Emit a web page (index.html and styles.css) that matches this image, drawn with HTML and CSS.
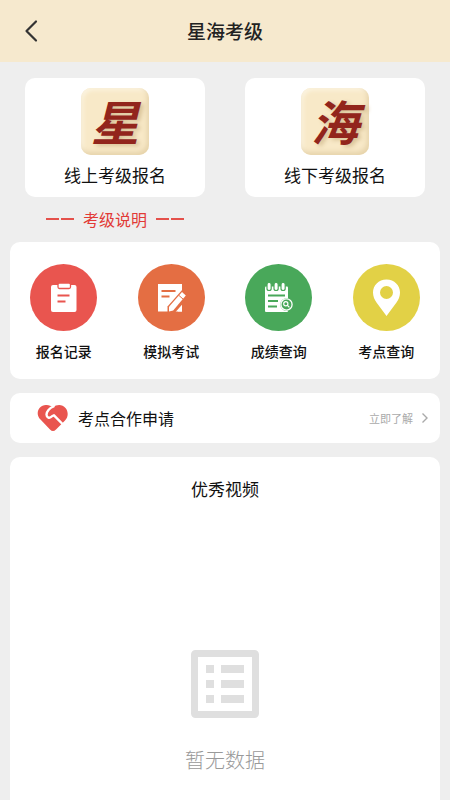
FILE: index.html
```html
<!DOCTYPE html>
<html lang="zh-CN">
<head>
<meta charset="utf-8">
<meta name="viewport" content="width=device-width, initial-scale=1">
<title>星海考级</title>
<link rel="stylesheet" href="styles.css">
</head>
<body>
<header class="topbar">
  <button class="back" type="button" aria-label="返回">
    <svg width="14" height="24" viewBox="0 0 14 24"><path d="M12 2.500L2.500 12L12 21.500" fill="none" stroke="#333" stroke-width="2.200" stroke-linecap="round" stroke-linejoin="round"/></svg>
  </button>
  <h1 class="title">星海考级</h1>
</header>
<main class="page">
  <nav class="entries">
    <a class="entry" href="#online"><span class="seal" aria-hidden="true">星</span><span>线上考级报名</span></a>
    <a class="entry" href="#offline"><span class="seal" aria-hidden="true">海</span><span>线下考级报名</span></a>
  </nav>
  <a class="notice" href="#notice"><span class="dashes"></span><span>考级说明</span><span class="dashes"></span></a>
  <nav class="panel menu">
    <a class="item" href="#records">
      <svg class="disc" viewBox="0 0 67 67"><circle cx="33.500" cy="33.500" r="33.500" fill="#e9554f"/><rect x="21" y="21" width="25.500" height="27" rx="2" fill="#fff"/><rect x="28" y="19" width="12.500" height="5.500" rx="1.500" fill="#fff" stroke="#e9554f" stroke-width="1.300"/><path d="M27.500 31.500h12M27.500 37.500h8" stroke="#e9554f" stroke-width="2.200"/></svg>
      <span>报名记录</span>
    </a>
    <a class="item" href="#mock">
      <svg class="disc" viewBox="0 0 67 67"><circle cx="33.500" cy="33.500" r="33.500" fill="#e46e43"/><path d="M20 20H44V47.500H20z" fill="#fff"/><path d="M23.500 27h14M23.500 32.500h8" stroke="#e46e43" stroke-width="2"/><path d="M44.500 25.500L29.500 42.500V48H37.500L50 34z" fill="#e46e43"/><path d="M44 28l3.800 3.400-12.600 15.100-4.200 1v-4.800z" fill="#fff"/><path d="M41 31.500l4.200 3.700" stroke="#e46e43" stroke-width="1"/><path d="M39.500 47.500L44 42.500v5z" fill="#fff"/></svg>
      <span>模拟考试</span>
    </a>
    <a class="item" href="#scores">
      <svg class="disc" viewBox="0 0 67 67"><circle cx="33.500" cy="33.500" r="33.500" fill="#49a85a"/><rect x="20" y="22.500" width="23" height="25.500" rx="1" fill="#fff"/><g fill="#fff" stroke="#49a85a" stroke-width="1.200"><rect x="22" y="18.500" width="4.200" height="8" rx="2"/><rect x="29" y="18.500" width="4.200" height="8" rx="2"/><rect x="36" y="18.500" width="4.200" height="8" rx="2"/></g><path d="M23 31.500h17M23 37h10M23 42.500h9" stroke="#49a85a" stroke-width="2"/><circle cx="41.500" cy="40.500" r="6.300" fill="#49a85a"/><circle cx="41.500" cy="40.500" r="5.600" fill="#49a85a" stroke="#fff" stroke-width="1.300"/><circle cx="40.800" cy="39.800" r="2.100" fill="none" stroke="#fff" stroke-width="1.200"/><path d="M42.400 41.400l2 2" stroke="#fff" stroke-width="1.300"/></svg>
      <span>成绩查询</span>
    </a>
    <a class="item" href="#sites">
      <svg class="disc" viewBox="0 0 67 67"><circle cx="33.500" cy="33.500" r="33.500" fill="#e2d146"/><path fill="#fff" fill-rule="evenodd" d="M33.500 15.500c-8 0-13.500 6-13.500 13 0 4 1.500 7 3.500 10L33.500 52l10-13.500c2-3 3.500-6 3.500-10 0-7-5.500-13-13.500-13zm0 6.500a6.500 6.500 0 1 1 0 13 6.500 6.500 0 0 1 0-13z"/></svg>
      <span>考点查询</span>
    </a>
  </nav>
  <a class="panel apply" href="#apply">
    <svg width="32" height="27" viewBox="0 0 32 27"><path fill="#e9554f" d="M16 2.500C12-1 6-.7 3 2.500-.3 6 0 11 3.500 14.500L13 24.500c2 2 4 2 6 0L28 15.500C31.500 12 31.500 6.500 28.500 3 25.500-.5 20-1 16 2.500z"/><path d="M16.500 1.500C12.500 3 9.500 6.500 9.500 9.500c0 3 3 4.500 5.500 1.800L17 10.300l8.500 8.700" fill="none" stroke="#fff" stroke-width="2.400" stroke-linecap="round" stroke-linejoin="round"/></svg>
    <span class="apply-name">考点合作申请</span>
    <span class="more">立即了解</span>
    <svg width="8" height="12" viewBox="0 0 8 12"><path d="M1.500 1.500L6 6l-4.500 4.500" fill="none" stroke="#aaa" stroke-width="1.400"/></svg>
  </a>
  <section class="panel videos">
    <h2 class="heading">优秀视频</h2>
    <div class="empty">
      <svg width="68" height="68" viewBox="0 0 68 68"><rect x="3.500" y="3.500" width="61" height="61" rx="1" fill="none" stroke="#dfdfdf" stroke-width="7" stroke-linejoin="round"/><path fill="#dfdfdf" d="M15 15h8v8h-8zM30 15h23v8H30zM15 30h8v8h-8zM30 30h23v8H30zM15 45h8v8h-8zM30 45h23v8H30z"/></svg>
      <p class="empty-text">暂无数据</p>
    </div>
  </section>
</main>
</body>
</html>
```
FILE: styles.css
```css
* { box-sizing: border-box; }
body {
  margin: 0;
  min-height: 100vh;
  display: flex;
  flex-direction: column;
  background: #eee;
  color: #111;
  font-family: "Noto Sans CJK SC", sans-serif;
}
a { color: inherit; text-decoration: none; }
svg { display: block; flex: none; }
.topbar {
  display: grid;
  grid-template-columns: 48px 1fr 48px;
  align-items: center;
  height: 62px;
  background: #f6e9ce;
}
.back {
  display: flex;
  justify-content: flex-end;
  padding: 0 10px 0 0;
  border: 0;
  background: none;
}
.title {
  margin: 0;
  text-align: center;
  font-size: 19px;
  line-height: 28px;
  font-weight: 500;
  color: #222;
}
.page {
  flex: 1;
  display: flex;
  flex-direction: column;
  padding: 16px 10px 0;
}
.entries {
  display: grid;
  grid-template-columns: 1fr 1fr;
  gap: 40px;
  padding: 0 15px;
}
.entry {
  display: flex;
  flex-direction: column;
  align-items: center;
  gap: 8px;
  padding: 10px 0;
  border-radius: 10px;
  background: #fff;
  font-size: 17px;
  line-height: 24px;
}
.seal {
  width: 68px;
  height: 67px;
  border-radius: 10px;
  background: #f8e9c8;
  box-shadow: inset -2px -3px 5px #e6d3aa, inset 2px 2px 4px #fcf5e4;
  color: #92251c;
  text-align: center;
  font-size: 48px;
  line-height: 64px;
  font-weight: 700;
  font-style: italic;
  text-shadow: 3px 2px 4px #d8c297;
}
.notice {
  display: flex;
  align-items: center;
  align-self: flex-start;
  gap: 9px;
  height: 43px;
  margin-bottom: 2px;
  padding-left: 36px;
  color: #e23a36;
  font-size: 16px;
  line-height: 24px;
}
.dashes {
  display: flex;
  justify-content: space-between;
  width: 28px;
}
.dashes::before,
.dashes::after {
  content: "";
  width: 13px;
  height: 2px;
  background: #e4504a;
}
.panel {
  border-radius: 10px;
  background: #fff;
}
.menu {
  display: grid;
  grid-template-columns: repeat(4, 1fr);
  padding: 22px 0 18px;
}
.item {
  display: flex;
  flex-direction: column;
  align-items: center;
  gap: 10px;
  font-size: 14px;
  line-height: 20px;
  font-weight: 500;
}
.disc { width: 67px; height: 67px; }
.apply {
  display: flex;
  align-items: center;
  height: 50px;
  margin: 14px 0;
  padding: 0 11px 0 27px;
}
.apply-name {
  flex: 1;
  padding-left: 9px;
  font-size: 16px;
  line-height: 24px;
}
.more {
  padding-right: 8px;
  color: #aaa;
  font-size: 11px;
  line-height: 16px;
}
.videos {
  flex: 1;
  padding-top: 20px;
  border-radius: 10px 10px 0 0;
}
.heading {
  margin: 0;
  text-align: center;
  font-size: 17px;
  line-height: 24px;
  font-weight: 400;
}
.empty {
  display: flex;
  flex-direction: column;
  align-items: center;
  gap: 28px;
  padding-top: 149px;
}
.empty-text {
  margin: 0;
  color: #999;
  font-size: 20px;
  line-height: 28px;
  font-weight: 300;
}
```
